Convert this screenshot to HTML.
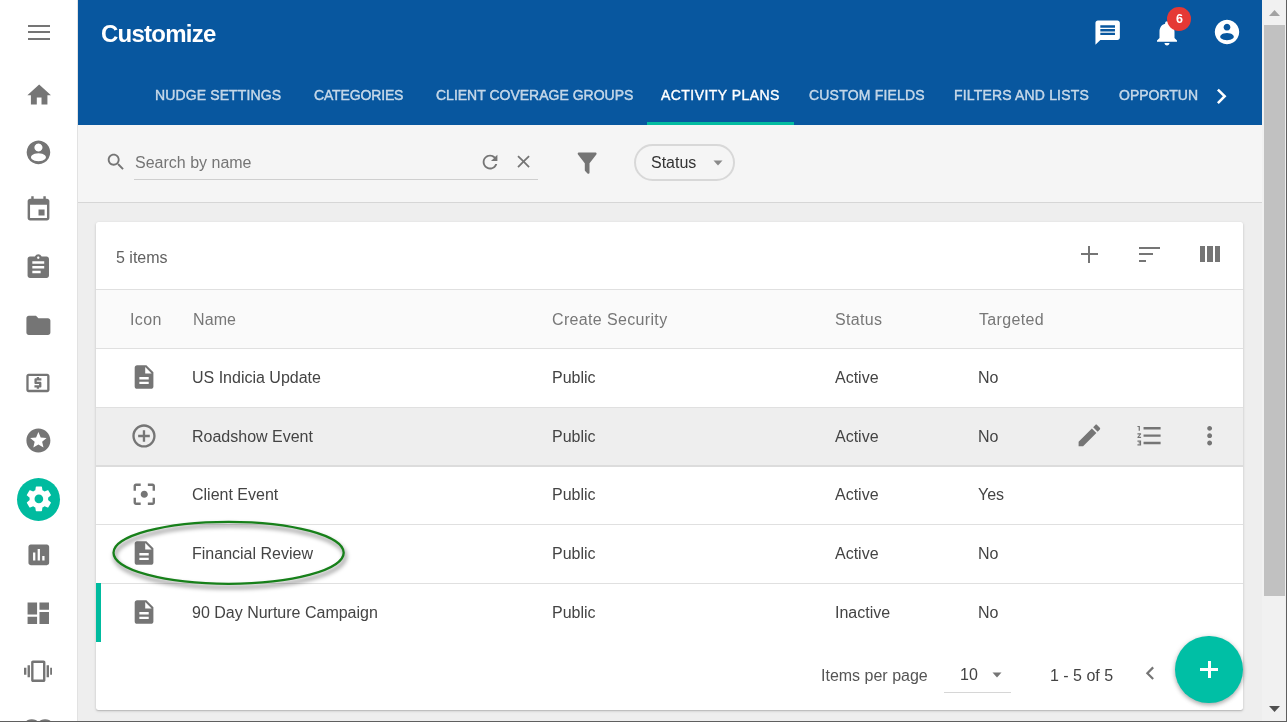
<!DOCTYPE html>
<html><head><meta charset="utf-8">
<style>
*{margin:0;padding:0;box-sizing:border-box}
html,body{width:1287px;height:722px;overflow:hidden;background:#fff;font-family:"Liberation Sans",sans-serif}
.a{position:absolute}
.t{position:absolute;white-space:nowrap;line-height:20px;will-change:transform}
svg.a{display:block}
#side{left:0;top:0;width:78px;height:722px;background:#fff;border-right:1px solid #e2e2e2}
#hdr{left:78px;top:0;width:1184px;height:125px;background:#08579f}
#tb{left:78px;top:125px;width:1184px;height:78px;background:#f5f5f5;border-bottom:1px solid #d6d6d6}
#ct{left:78px;top:203px;width:1184px;height:519px;background:#eeeeee}
.tab{font-size:14px;-webkit-text-stroke:0.4px currentColor;color:rgba(255,255,255,.7);top:85.4px}
.g{fill:#757575}
#card{left:96px;top:222px;width:1147px;height:487.6px;background:#fff;border-radius:2.5px;box-shadow:0 1px 3px rgba(0,0,0,.18),0 1px 1px rgba(0,0,0,.1)}
.hl{left:96px;width:1147px;height:1px;background:#e0e0e0}
.c{font-size:16px;color:#444}
.h{font-size:16px;color:#777;letter-spacing:0.35px}
</style></head><body>
<div id="side" class="a"></div>
<div id="hdr" class="a"></div>
<div id="tb" class="a"></div>
<div id="ct" class="a"></div>

<!-- header -->
<div class="t" style="left:101px;top:18.8px;font-size:24px;line-height:30px;font-weight:bold;color:#fff;letter-spacing:-0.75px">Customize</div>
<div class="t tab" style="left:155.3px;letter-spacing:0.12px">NUDGE SETTINGS</div>
<div class="t tab" style="left:313.9px;letter-spacing:-0.15px">CATEGORIES</div>
<div class="t tab" style="left:436px">CLIENT COVERAGE GROUPS</div>
<div class="t tab" style="left:661.3px;color:#fff;letter-spacing:0.45px">ACTIVITY PLANS</div>
<div class="t tab" style="left:808.8px;letter-spacing:0.2px">CUSTOM FIELDS</div>
<div class="t tab" style="left:953.8px;letter-spacing:0.17px">FILTERS AND LISTS</div>
<div class="a" style="left:1118px;top:80px;width:80px;height:30px;overflow:hidden"><div class="t tab" style="left:0.8px;top:5.4px">OPPORTUNITIES</div></div>
<div class="a" style="left:647px;top:122px;width:147px;height:3px;background:#03bca0"></div>

<!-- sidebar -->
<div class="a" style="left:27.5px;top:25.0px;width:22px;height:2px;background:#757575"></div>
<div class="a" style="left:27.5px;top:31.4px;width:22px;height:2px;background:#757575"></div>
<div class="a" style="left:27.5px;top:37.5px;width:22px;height:2px;background:#757575"></div>
<svg class="a" style="left:24.54px;top:81.16px" width="28.32" height="28.32" viewBox="0 0 24 24"><path fill="#757575" d="M10 20v-6h4v6h5v-8h3L12 3 2 12h3v8z"/></svg>
<svg class="a" style="left:26px;top:140px" width="25" height="25" viewBox="0 0 25 25"><path fill="#757575" fill-rule="evenodd" d="M12.45 0.55a11.8 11.8 0 1 0 0.001 0zM12.45 3.5a4 4 0 1 0 0.001 0zM12.45 13.2a7.5 4 0 1 0 0.001 0z"/></svg>
<svg class="a" style="left:23.97px;top:195.29px" width="29.04" height="29.04" viewBox="0 0 24 24"><path fill="#757575" d="M17 12h-5v5h5v-5zM16 1v2H8V1H6v2H5c-1.11 0-1.99.9-1.99 2L3 19c0 1.1.89 2 2 2h14c1.1 0 2-.9 2-2V5c0-1.1-.9-2-2-2h-1V1h-2zm3 18H5V8h14v11z"/></svg>
<svg class="a" style="left:24.03px;top:253.41px" width="28.56" height="28.56" viewBox="0 0 24 24"><path fill="#757575" d="M19 3h-4.18C14.4 1.84 13.3 1 12 1c-1.3 0-2.4.84-2.82 2H5c-1.1 0-2 .9-2 2v14c0 1.1.9 2 2 2h14c1.1 0 2-.9 2-2V5c0-1.1-.9-2-2-2zm-7 0c.55 0 1 .45 1 1s-.45 1-1 1-1-.45-1-1 .45-1 1-1zm2 14H7v-2h7v2zm3-4H7v-2h10v2zm0-4H7V7h10v2z"/></svg>
<svg class="a" style="left:24.10px;top:311.20px" width="28.80" height="28.80" viewBox="0 0 24 24"><path fill="#757575" d="M10 4H4c-1.1 0-1.99.9-1.99 2L2 18c0 1.1.9 2 2 2h16c1.1 0 2-.9 2-2V8c0-1.1-.9-2-2-2h-8l-2-2z"/></svg>
<svg class="a" style="left:24.48px;top:369.36px" width="27.84" height="27.84" viewBox="0 0 24 24"><path fill="#757575" d="M11 17h2v-1h1c.55 0 1-.45 1-1v-3c0-.55-.45-1-1-1h-3v-1h4V8h-2V7h-2v1h-1c-.55 0-1 .45-1 1v3c0 .55.45 1 1 1h3v1H9v2h2v1zm9-13H4c-1.11 0-1.99.89-1.99 2L2 18c0 1.11.89 2 2 2h16c1.11 0 2-.89 2-2V6c0-1.11-.89-2-2-2zm0 14H4V6h16v12z"/></svg>
<svg class="a" style="left:24.10px;top:425.80px" width="28.80" height="28.80" viewBox="0 0 24 24"><path fill="#757575" d="M11.99 2C6.47 2 2 6.48 2 12s4.47 10 9.99 10C17.52 22 22 17.52 22 12S17.52 2 11.99 2zm4.24 16L12 15.45 7.77 18l1.12-4.81-3.73-3.23 4.92-.42L12 5l1.92 4.53 4.92.42-3.730 3.23L16.23 18z"/></svg>
<div class="a" style="left:17px;top:477.8px;width:43px;height:43px;border-radius:50%;background:#00bb9f"></div>
<svg class="a" style="left:23.62px;top:483.52px" width="29.76" height="29.76" viewBox="0 0 24 24"><path fill="#fff" d="M19.43 12.98c.04-.32.07-.64.07-.98s-.03-.66-.07-.98l2.11-1.65c.19-.15.24-.42.12-.64l-2-3.46c-.12-.22-.39-.3-.61-.22l-2.490 1c-.52-.4-1.08-.73-1.69-.98l-.38-2.65C14.46 2.18 14.25 2 14 2h-4c-.25 0-.46.18-.49.42l-.38 2.65c-.61.25-1.17.59-1.690.98l-2.49-1c-.23-.09-.49 0-.61.22l-2 3.46c-.13.22-.07.49.12.64l2.11 1.65c-.04.32-.07.65-.07.98s.03.66.07.98l-2.11 1.65c-.19.15-.24.42-.12.64l2 3.46c.12.22.39.3.61.22l2.49-1c.52.4 1.08.73 1.69.98l.38 2.65c.03.24.24.42.49.42h4c.25 0 .46-.18.49-.42l.38-2.65c.61-.25 1.17-.59 1.69-.98l2.49 1c.23.09.49 0 .61-.22l2-3.46c.12-.22.07-.49-.12-.64l-2.11-1.65zM12 15.5c-1.93 0-3.5-1.57-3.5-3.5s1.57-3.5 3.5-3.5 3.5 1.57 3.5 3.5-1.57 3.5-3.5 3.5z"/></svg>
<svg class="a" style="left:24.75px;top:541.45px" width="27.60" height="27.60" viewBox="0 0 24 24"><path fill="#757575" d="M19 3H5c-1.1 0-2 .9-2 2v14c0 1.1.9 2 2 2h14c1.1 0 2-.9 2-2V5c0-1.1-.9-2-2-2zM9 17H7v-7h2v7zm4 0h-2V7h2v10zm4 0h-2v-4h2v4z"/></svg>
<svg class="a" style="left:24.43px;top:599.03px" width="28.56" height="28.56" viewBox="0 0 24 24"><path fill="#757575" d="M3 13h8V3H3v10zm0 8h8v-6H3v6zm10 0h8V11h-8v10zm0-18v6h8V3h-8z"/></svg>
<svg class="a" style="left:23.90px;top:656.93px" width="28.56" height="28.56" viewBox="0 0 24 24"><path fill="#757575" d="M0 15h2V9H0v6zm3 2h2V7H3v10zm19-8v6h2V9h-2zm-3 8h2V7h-2v10zM16.5 3h-9C6.67 3 6 3.67 6 4.5v15c0 .83.67 1.5 1.5 1.5h9c.83 0 1.5-.67 1.5-1.5v-15c0-.83-.67-1.5-1.5-1.5zM16 19H8V5h8v14z"/></svg>
<svg class="a" style="left:20px;top:715px" width="40" height="7" viewBox="0 0 40 7"><ellipse cx="11.8" cy="6.5" rx="5.6" ry="2.2" fill="#757575"/><ellipse cx="25.1" cy="6.5" rx="5.6" ry="2.2" fill="#757575"/></svg>
<!-- header icons -->
<svg class="a" style="left:1093.1px;top:17.9px" width="29.3" height="29.3" viewBox="0 0 24 24"><path fill="#fff" d="M20 2H4c-1.1 0-1.99.9-1.99 2L2 22l4-4h14c1.1 0 2-.9 2-2V4c0-1.1-.9-2-2-2zm-2 12H6v-2h12v2zm0-3H6V9h12v2zm0-3H6V6h12v2z"/></svg>
<svg class="a" style="left:1152.4px;top:17.9px" width="30.00" height="30.00" viewBox="0 0 24 24"><path fill="#fff" d="M12 22c1.1 0 2-.9 2-2h-4c0 1.1.89 2 2 2zm6-6v-5c0-3.07-1.64-5.64-4.5-6.320V4c0-.83-.67-1.5-1.5-1.5s-1.5.67-1.5 1.5v.68C7.63 5.36 6 7.92 6 11v5l-2 2v1h16v-1l-2-2z"/></svg>
<div class="a" style="left:1166.9px;top:6.9px;width:23.8px;height:23.8px;border-radius:50%;background:#e53935"></div>
<div class="t" style="left:1166.9px;top:8.6px;width:23.8px;text-align:center;font-size:12.5px;font-weight:bold;color:#fff;padding-left:1px">6</div>
<svg class="a" style="left:1202.4px;top:7.2px" width="50" height="50" viewBox="0 0 50 50"><path fill="#fff" fill-rule="evenodd" d="M25 12.8a12.2 12.2 0 1 0 0.001 0zM25 16.8a3.4 3.4 0 1 0 0.001 0zM25 26.1a6.8 3.6 0 1 0 0.001 0z"/></svg>
<svg class="a" style="left:1205.96px;top:81.09px" width="30.72" height="30.72" viewBox="0 0 24 24"><path fill="#fff" d="M10 6L8.59 7.41 13.17 12l-4.58 4.59L10 18l6-6z"/></svg>
<!-- toolbar -->
<svg class="a" style="left:105.35px;top:151.25px" width="21.96" height="21.96" viewBox="0 0 24 24"><path fill="#757575" d="M15.5 14h-.79l-.28-.27C15.41 12.59 16 11.11 16 9.5 16 5.91 13.09 3 9.5 3S3 5.91 3 9.5 5.91 16 9.5 16c1.61 0 3.09-.59 4.23-1.57l.27.28v.79l5 4.99L20.49 19l-4.99-5zm-6 0C7.01 14 5 11.990 5 9.5S7.01 5 9.5 5 14 7.01 14 9.5 11.99 14 9.5 14z"/></svg>
<div class="t" style="left:135px;top:153.1px;font-size:16px;color:#757575">Search by name</div>
<div class="a" style="left:134px;top:179px;width:404px;height:1px;background:#cfcfcf"></div>
<svg class="a" style="left:478.81px;top:151.02px" width="22.08" height="22.08" viewBox="0 0 24 24"><path fill="#757575" d="M17.65 6.35C16.2 4.9 14.21 4 12 4c-4.42 0-7.99 3.58-7.99 8s3.57 8 7.99 8c3.73 0 6.84-2.55 7.73-6h-2.08c-.82 2.33-3.04 4-5.65 4-3.31 0-6-2.69-6-6s2.69-6 6-6c1.66 0 3.14.69 4.22 1.78L13 11h7V4l-2.35 2.35z"/></svg>
<svg class="a" style="left:512.90px;top:151.40px" width="21.12" height="21.12" viewBox="0 0 24 24"><path fill="#757575" d="M19 6.41L17.59 5 12 10.59 6.41 5 5 6.41 10.59 12 5 17.59 6.41 19 12 13.41 17.59 19 19 17.59 13.41 12z"/></svg>
<svg class="a" style="left:572.9px;top:148.6px" width="28.32" height="28.32" viewBox="0 0 24 24"><path fill="#757575" d="M14 12V19.88C14.04 20.18 13.94 20.5 13.71 20.71C13.32 21.1 12.69 21.1 12.3 20.71L10.29 18.7C10.06 18.47 9.96 18.16 10 17.87V12H9.97L4.21 4.62C3.87 4.19 3.95 3.56 4.38 3.22C4.57 3.08 4.78 3 5 3H19C19.22 3 19.43 3.08 19.62 3.22C20.05 3.56 20.13 4.19 19.79 4.62L14.03 12H14Z"/></svg>
<div class="a" style="left:634.3px;top:144px;width:100.3px;height:37.2px;border:2px solid #d8d8d8;border-radius:19px"></div>
<div class="t" style="left:650.9px;top:153.1px;font-size:16px;color:#333">Status</div>
<svg class="a" style="left:713px;top:159.5px" width="10" height="6" viewBox="0 0 10 6"><path d="M0.5 0.5h9l-4.5 5z" fill="#8a8a8a"/></svg>
<!-- card -->
<div id="card" class="a"></div>
<div class="t c" style="left:116px;top:247.5px;color:#616161">5 items</div>
<div class="a" style="left:1080.6px;top:253.2px;width:17px;height:2px;background:#757575"></div><div class="a" style="left:1088.2px;top:245.8px;width:2px;height:17px;background:#757575"></div>
<div class="a" style="left:1139px;top:247.2px;width:21.2px;height:2.1px;background:#757575"></div><div class="a" style="left:1139px;top:253.3px;width:14.1px;height:2.1px;background:#757575"></div><div class="a" style="left:1139px;top:259.5px;width:7.1px;height:2.1px;background:#757575"></div>
<div class="a" style="left:1200px;top:246px;width:5.4px;height:15.7px;background:#757575"></div><div class="a" style="left:1207.3px;top:246px;width:5.5px;height:15.7px;background:#757575"></div><div class="a" style="left:1214.7px;top:246px;width:5.5px;height:15.7px;background:#757575"></div>
<div class="a" style="left:96px;top:289.4px;width:1147px;height:59px;background:#fafafa"></div>
<div class="a hl" style="top:289px"></div>
<div class="a hl" style="top:348px"></div>
<div class="t h" style="left:129.8px;top:310.2px">Icon</div>
<div class="t h" style="left:192.6px;top:310.2px;letter-spacing:0.1px">Name</div>
<div class="t h" style="left:552px;top:310.2px">Create Security</div>
<div class="t h" style="left:835px;top:310.2px">Status</div>
<div class="t h" style="left:978.6px;top:310.2px">Targeted</div>
<div class="a" style="left:96px;top:407.05px;width:1147px;height:58.75px;background:#eeeeee"></div>
<div class="a hl" style="top:407.05px"></div>
<div class="a hl" style="top:465.2px;height:1.6px;background:#dcdcdc"></div>
<div class="a hl" style="top:524.1px"></div>
<div class="a hl" style="top:583.30px"></div>
<div class="a" style="left:96px;top:583.30px;width:4.8px;height:58.75px;background:#00bb9f"></div>
<svg class="a" style="left:129.96px;top:362.6px" width="28.08" height="28.08" viewBox="0 0 24 24"><path fill="#757575" d="M14 2H6c-1.1 0-1.99.9-1.99 2L4 20c0 1.1.89 2 2 2h12c1.1 0 2-.9 2-2V8l-6-6zm2 16H8v-2h8v2zm0-4H8v-2h8v2zm-3-5V3.5L18.5 9H13z"/></svg>
<div class="t c" style="left:192.3px;top:367.56px">US Indicia Update</div>
<div class="t c" style="left:552.3px;top:367.56px">Public</div>
<div class="t c" style="left:834.8px;top:367.56px">Active</div>
<div class="t c" style="left:978.4px;top:367.56px">No</div>
<svg class="a" style="left:129.92px;top:421.6px" width="27.96" height="27.96" viewBox="0 0 24 24"><path fill="#757575" d="M13 7h-2v4H7v2h4v4h2v-4h4v-2h-4V7zm-1-5C6.48 2 2 6.48 2 12s4.48 10 10 10 10-4.48 10-10S17.52 2 12 2zm0 18c-4.41 0-8-3.59-8-8s3.59-8 8-8 8 3.59 8 8-3.59 8-8 8z"/></svg>
<div class="t c" style="left:192.3px;top:427.2px">Roadshow Event</div>
<div class="t c" style="left:552.3px;top:427.2px">Public</div>
<div class="t c" style="left:834.8px;top:427.2px">Active</div>
<div class="t c" style="left:978.4px;top:427.2px">No</div>
<svg class="a" style="left:129.92px;top:480.1px" width="28.56" height="28.56" viewBox="0 0 24 24"><path fill="#757575" d="M5 15H3v4c0 1.1.9 2 2 2h4v-2H5v-4zM5 5h4V3H5c-1.1 0-2 .9-2 2v4h2V5zm14-2h-4v2h4v4h2V5c0-1.1-.9-2-2-2zm0 16h-4v2h4c1.1 0 2-.9 2-2v-4h-2v4zM12 9c-1.66 0-3 1.34-3 3s1.34 3 3 3 3-1.34 3-3-1.34-3-3-3z"/></svg>
<div class="t c" style="left:192.3px;top:485.06px">Client Event</div>
<div class="t c" style="left:552.3px;top:485.06px">Public</div>
<div class="t c" style="left:834.8px;top:485.06px">Active</div>
<div class="t c" style="left:978.4px;top:485.06px">Yes</div>
<svg class="a" style="left:129.96px;top:539.1px" width="28.08" height="28.08" viewBox="0 0 24 24"><path fill="#757575" d="M14 2H6c-1.1 0-1.99.9-1.99 2L4 20c0 1.1.89 2 2 2h12c1.1 0 2-.9 2-2V8l-6-6zm2 16H8v-2h8v2zm0-4H8v-2h8v2zm-3-5V3.5L18.5 9H13z"/></svg>
<div class="t c" style="left:192.3px;top:543.81px">Financial Review</div>
<div class="t c" style="left:552.3px;top:543.81px">Public</div>
<div class="t c" style="left:834.8px;top:543.81px">Active</div>
<div class="t c" style="left:978.4px;top:543.81px">No</div>
<svg class="a" style="left:129.96px;top:597.9px" width="28.08" height="28.08" viewBox="0 0 24 24"><path fill="#757575" d="M14 2H6c-1.1 0-1.99.9-1.99 2L4 20c0 1.1.89 2 2 2h12c1.1 0 2-.9 2-2V8l-6-6zm2 16H8v-2h8v2zm0-4H8v-2h8v2zm-3-5V3.5L18.5 9H13z"/></svg>
<div class="t c" style="left:192.3px;top:602.56px">90 Day Nurture Campaign</div>
<div class="t c" style="left:552.3px;top:602.56px">Public</div>
<div class="t c" style="left:834.8px;top:602.56px">Inactive</div>
<div class="t c" style="left:978.4px;top:602.56px">No</div>
<svg class="a" style="left:1074.90px;top:421.20px" width="28.80" height="28.80" viewBox="0 0 24 24"><path fill="#757575" d="M3 17.25V21h3.75L17.81 9.94l-3.75-3.75L3 17.25zM20.71 7.04c.39-.39.39-1.02 0-1.41l-2.34-2.34c-.39-.39-1.02-.39-1.41 0l-1.83 1.83 3.75 3.75 1.83-1.83z"/></svg>
<svg class="a" style="left:1134.66px;top:420.72px" width="29.28" height="29.28" viewBox="0 0 24 24"><path fill="#757575" d="M2 17h2v.5H3v1h1v.5H2v1h3v-4H2v1zm1-9h1V4H2v1h1v3zm-1 3h1.8L2 13.1v.9h3v-1H3.2L5 10.9V10H2v1zm5-6v2h14V5H7zm0 14h14v-2H7v2zm0-6h14v-2H7v2z"/></svg>
<svg class="a" style="left:1194.56px;top:420.86px" width="29.28" height="29.28" viewBox="0 0 24 24"><path fill="#757575" d="M12 8c1.1 0 2-.9 2-2s-.9-2-2-2-2 .9-2 2 .9 2 2 2zm0 2c-1.1 0-2 .9-2 2s.9 2 2 2 2-.9 2-2-.9-2-2-2zm0 6c-1.1 0-2 .9-2 2s.9 2 2 2 2-.9 2-2-.9-2-2-2z"/></svg>
<div class="t c" style="left:821.4px;top:665.5px;color:#555">Items per page</div>
<div class="t c" style="left:959.5px;top:664.5px;color:#444">10</div>
<svg class="a" style="left:992.3px;top:672.2px" width="10" height="6" viewBox="0 0 10 6"><path d="M0.5 0.5h9l-4.5 5z" fill="#757575"/></svg>
<div class="a" style="left:943.5px;top:691.5px;width:67px;height:1px;background:#d6d6d6"></div>
<div class="t c" style="left:1050.3px;top:665.5px;color:#444">1 - 5 of 5</div>
<svg class="a" style="left:1137.20px;top:660.20px" width="26.40" height="26.40" viewBox="0 0 24 24"><path fill="#757575" d="M15.41 7.41L14 6l-6 6 6 6 1.41-1.41L10.83 12z"/></svg>
<div class="a" style="left:1175.2px;top:635.7px;width:67.6px;height:67.6px;border-radius:50%;background:#00bfa5;box-shadow:0 2px 4px rgba(0,0,0,.28),0 1px 6px rgba(0,0,0,.1)"></div>
<div class="a" style="left:1200px;top:668px;width:18px;height:3px;background:#fff"></div><div class="a" style="left:1207.5px;top:661.2px;width:3px;height:16.8px;background:#fff"></div>
<svg class="a" style="left:0;top:0" width="400" height="722" viewBox="0 0 400 722"><defs><filter id="sh" x="-20%" y="-50%" width="140%" height="200%"><feGaussianBlur stdDeviation="2"/></filter></defs><ellipse cx="230" cy="556.3" rx="115.1" ry="31" fill="none" stroke="rgba(0,0,0,.38)" stroke-width="3.5" filter="url(#sh)"/><ellipse cx="228.6" cy="552.8" rx="115.1" ry="31" fill="none" stroke="#17801a" stroke-width="2.3"/></svg>
<!-- scrollbar -->
<div class="a" style="left:1262px;top:0;width:25px;height:722px;background:#f1f1f1"></div>
<div class="a" style="left:1264px;top:25px;width:21px;height:571px;background:#c1c1c1"></div>
<svg class="a" style="left:1268px;top:9px" width="13" height="8" viewBox="0 0 13 8"><path d="M1 7h11L6.5 1z" fill="#a3a3a3"/></svg>
<svg class="a" style="left:1268px;top:705px" width="13" height="8" viewBox="0 0 13 8"><path d="M1 1h11L6.5 7z" fill="#505050"/></svg>
<div class="a" style="left:1286px;top:0;width:1px;height:722px;background:#5f5f5f"></div>
<div class="a" style="left:0;top:721px;width:1287px;height:1px;background:#5f5f5f"></div>
</body></html>
